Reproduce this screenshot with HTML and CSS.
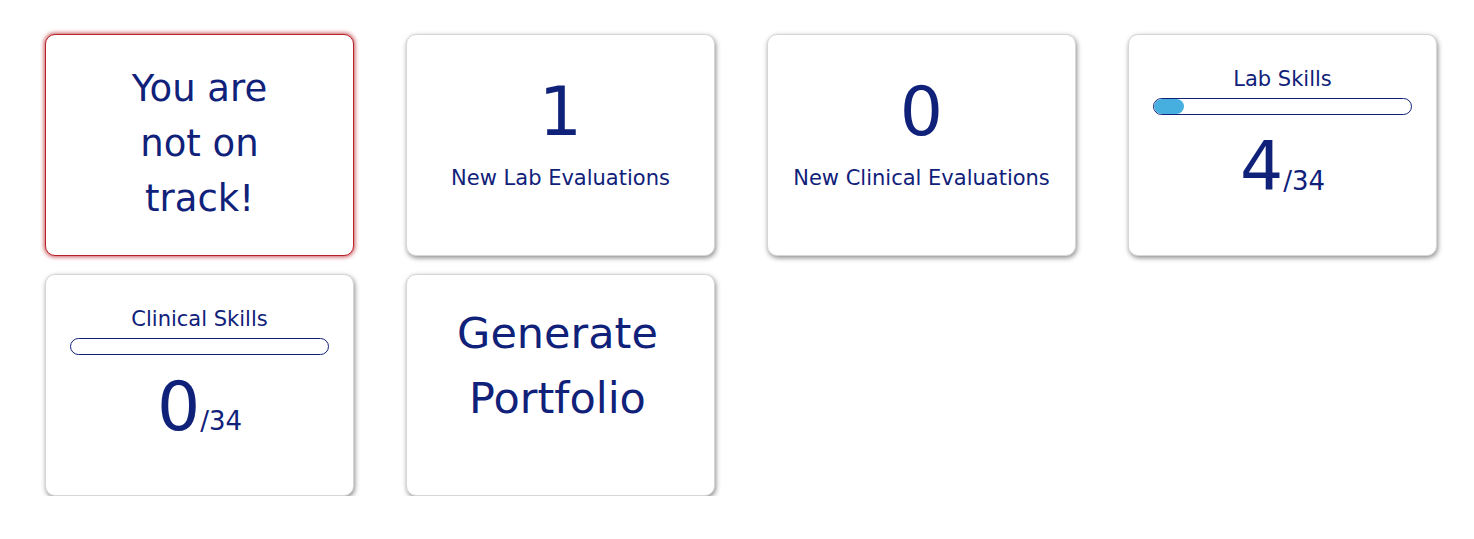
FILE: index.html
```html
<!DOCTYPE html>
<html lang="en">
<head>
<meta charset="utf-8">
<title>Dashboard</title>
<link rel="stylesheet" href="styles.css">
</head>
<body>
<main class="grid">
  <div class="card card--alert">
    <div class="alert-text">You are<br>not on<br>track!</div>
  </div>
  <div class="card">
    <div class="big">1</div>
    <div class="label">New Lab Evaluations</div>
  </div>
  <div class="card">
    <div class="big">0</div>
    <div class="label">New Clinical Evaluations</div>
  </div>
  <div class="card">
    <div class="title">Lab Skills</div>
    <div class="bar"><div class="bar-fill" style="width: 11.76%"></div></div>
    <div class="big">4<span class="total">/34</span></div>
  </div>
  <div class="card">
    <div class="title">Clinical Skills</div>
    <div class="bar"><div class="bar-fill" style="width: 0%"></div></div>
    <div class="big">0<span class="total">/34</span></div>
  </div>
  <div class="card card--action">
    <div class="portfolio">Generate<br>Portfolio</div>
  </div>
</main>
</body>
</html>
```

FILE: styles.css
```css
html, body {
  margin: 0;
  padding: 0;
  background: #ffffff;
}

body {
  font-family: "DejaVu Sans", Verdana, sans-serif;
  color: #10217a;
}

.grid {
  display: grid;
  grid-template-columns: repeat(4, 1fr);
  grid-auto-rows: 222px;
  column-gap: 52px;
  row-gap: 18px;
  margin: 34px 37px 0 45px;
}

.card {
  box-sizing: border-box;
  background: #fff;
  border: 1px solid #d6d6d6;
  border-radius: 10px;
  box-shadow: 1px 2px 5px rgba(0, 0, 0, 0.45);
  padding: 26px 24px 0;
  display: flex;
  flex-direction: column;
  align-items: center;
  text-align: center;
}

.card--alert {
  border-color: #b8232a;
  box-shadow: 0 0 4px 1px rgba(180, 30, 36, 0.75);
}

.card--action {
  padding-right: 30px;
}

.alert-text {
  font-size: 37px;
  line-height: 55px;
}

.big {
  font-size: 68px;
  line-height: 1.5;
}

.total {
  font-size: 26px;
}

.label {
  font-size: 21px;
  line-height: 1.5;
}

.title {
  font-size: 21px;
  line-height: 37px;
}

.bar {
  box-sizing: border-box;
  align-self: stretch;
  height: 17px;
  border: 1px solid #10217a;
  border-radius: 9px;
  overflow: hidden;
  margin-bottom: 1px;
}

.bar-fill {
  height: 100%;
  background: #46afe0;
  border-radius: 9px;
}

.portfolio {
  font-size: 43px;
  line-height: 65px;
}
```
